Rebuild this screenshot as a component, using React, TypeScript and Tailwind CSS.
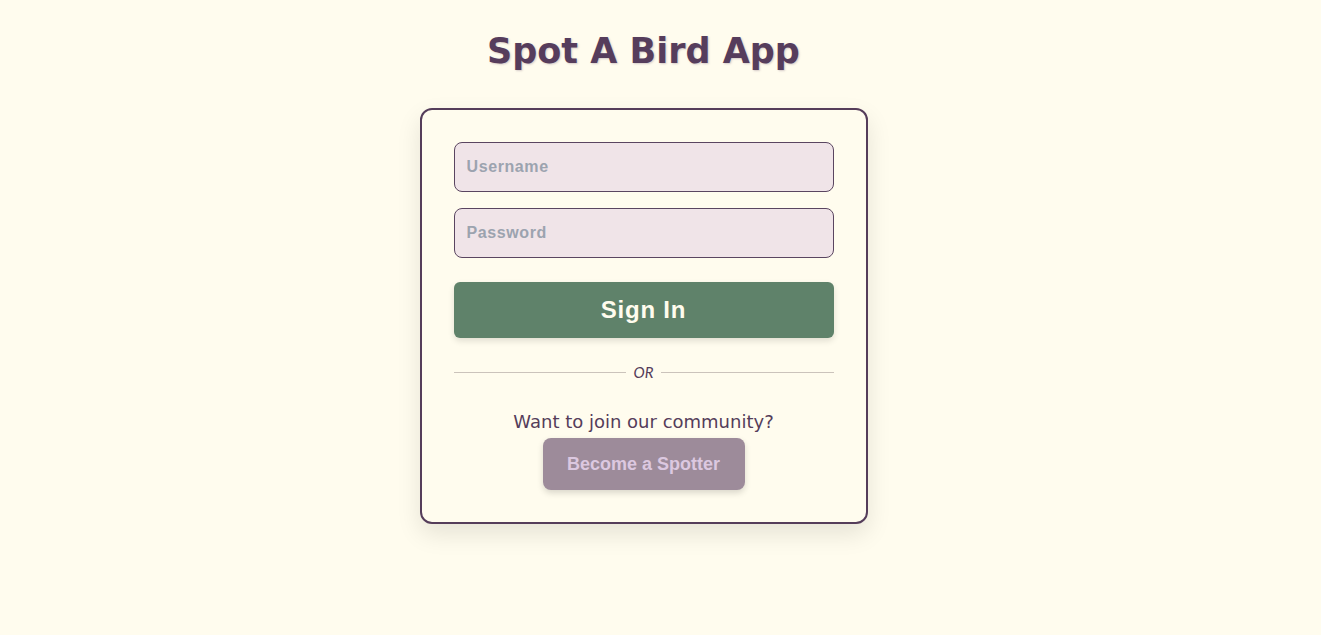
import { useState } from "react";

const comic = { fontFamily: '"Comic Sans MS", "DejaVu Sans", sans-serif' };

export default function App() {
  const [username, setUsername] = useState("");
  const [password, setPassword] = useState("");

  return (
    <div className="min-h-screen bg-[#fffcee] flex flex-col items-center pt-[26px] pr-[34px]">
      <h1
        className="text-[35px] font-bold leading-[50px] text-[#563d5c] [text-shadow:1px_1px_2px_rgba(86,61,92,0.25)]"
        style={comic}
      >
        Spot A Bird App
      </h1>

      <div className="mt-[32px] w-[448px] rounded-xl border-2 border-[#553d5a] bg-[#fffcee] p-8 shadow-[0_10px_25px_rgba(0,0,0,0.1)]">
        <form className="flex flex-col" onSubmit={(e) => e.preventDefault()}>
          <div className="flex flex-col gap-4">
            <input
              value={username}
              onChange={(e) => setUsername(e.target.value)}
              placeholder="Username"
              className="h-[50px] rounded-lg border border-[#5a4560] bg-[#f0e4e8] px-3 text-base font-bold tracking-[0.6px] text-[#553d5a] outline-none placeholder:text-[#9ca3af] font-['Liberation_Sans',Arial,sans-serif]"
            />
            <input
              type="password"
              value={password}
              onChange={(e) => setPassword(e.target.value)}
              placeholder="Password"
              className="h-[50px] rounded-lg border border-[#5a4560] bg-[#f0e4e8] px-3 text-base font-bold tracking-[0.6px] text-[#553d5a] outline-none placeholder:text-[#9ca3af] font-['Liberation_Sans',Arial,sans-serif]"
            />
          </div>

          <button
            type="submit"
            className="mt-6 h-14 rounded-md bg-[#5f826a] text-2xl font-bold tracking-[0.8px] text-[#fffcee] shadow-[0_3px_6px_rgba(0,0,0,0.12)] font-['Liberation_Sans',Arial,sans-serif]"
          >
            Sign In
          </button>
        </form>

        <div className="mt-6 flex items-center gap-2">
          <div className="h-px flex-1 bg-[#cbc3bb]" />
          <span className="text-[15px] leading-5 italic text-[#553d5a] font-['Lato',sans-serif]">OR</span>
          <div className="h-px flex-1 bg-[#cbc3bb]" />
        </div>

        <div className="mt-[28px] flex flex-col items-center">
          <p className="text-[18px] leading-6 text-[#553d5a]" style={comic}>
            Want to join our community?
          </p>
          <button
            type="button"
            className="mt-[4px] h-[52px] w-[202px] rounded-lg bg-[#9d8b9a] text-lg font-bold text-[#dcc8e0] shadow-[0_3px_6px_rgba(0,0,0,0.15)] font-['Liberation_Sans',Arial,sans-serif]"
          >
            Become a Spotter
          </button>
        </div>
      </div>
    </div>
  );
}
